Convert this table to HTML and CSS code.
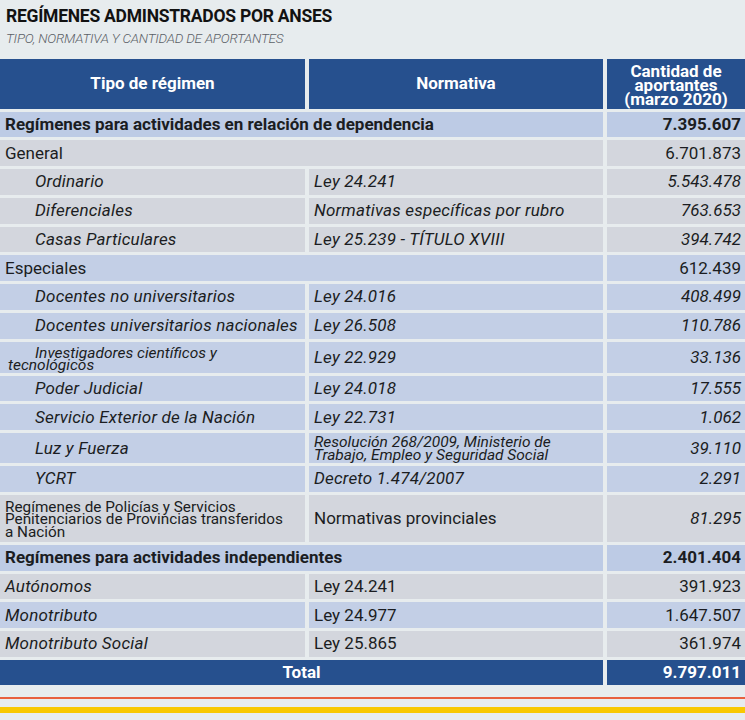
FILE: index.html
```html
<!DOCTYPE html>
<html lang="es">
<head>
<meta charset="utf-8">
<title>Regímenes administrados por ANSES</title>
<link rel="stylesheet" href="styles.css">
</head>
<body>
<header class="titles">
  <h1 class="title">REGÍMENES ADMINSTRADOS POR ANSES</h1>
  <p class="subtitle">TIPO, NORMATIVA Y CANTIDAD DE APORTANTES</p>
</header>
<div class="grid">
  <div class="cell head">Tipo de régimen</div>
  <div class="cell head">Normativa</div>
  <div class="cell head head-qty">Cantidad de<br>aportantes<br>(marzo 2020)</div>

  <div class="cell cat span2 bold">Regímenes para actividades en relación de dependencia</div>
  <div class="cell cat num bold">7.395.607</div>

  <div class="cell gray span2">General</div>
  <div class="cell gray num">6.701.873</div>

  <div class="cell gray sub it">Ordinario</div>
  <div class="cell gray it">Ley 24.241</div>
  <div class="cell gray num it">5.543.478</div>

  <div class="cell gray sub it">Diferenciales</div>
  <div class="cell gray it">Normativas específicas por rubro</div>
  <div class="cell gray num it">763.653</div>

  <div class="cell gray sub it">Casas Particulares</div>
  <div class="cell gray it">Ley 25.239 - TÍTULO XVIII</div>
  <div class="cell gray num it">394.742</div>

  <div class="cell blue span2">Especiales</div>
  <div class="cell blue num">612.439</div>

  <div class="cell blue sub it">Docentes no universitarios</div>
  <div class="cell blue it">Ley 24.016</div>
  <div class="cell blue num it">408.499</div>

  <div class="cell blue sub it">Docentes universitarios nacionales</div>
  <div class="cell blue it">Ley 26.508</div>
  <div class="cell blue num it">110.786</div>

  <div class="cell blue it inv">Investigadores científicos y<br>tecnológicos</div>
  <div class="cell blue it">Ley 22.929</div>
  <div class="cell blue num it">33.136</div>

  <div class="cell blue sub it">Poder Judicial</div>
  <div class="cell blue it">Ley 24.018</div>
  <div class="cell blue num it">17.555</div>

  <div class="cell blue sub it">Servicio Exterior de la Nación</div>
  <div class="cell blue it">Ley 22.731</div>
  <div class="cell blue num it">1.062</div>

  <div class="cell blue sub it">Luz y Fuerza</div>
  <div class="cell blue it two">Resolución 268/2009, Ministerio de<br>Trabajo, Empleo y Seguridad Social</div>
  <div class="cell blue num it">39.110</div>

  <div class="cell blue sub it">YCRT</div>
  <div class="cell blue it">Decreto 1.474/2007</div>
  <div class="cell blue num it">2.291</div>

  <div class="cell gray three">Regímenes de Policías y Servicios<br>Penitenciarios de Provincias transferidos<br>a Nación</div>
  <div class="cell gray">Normativas provinciales</div>
  <div class="cell gray num it">81.295</div>

  <div class="cell cat span2 bold">Regímenes para actividades independientes</div>
  <div class="cell cat num bold">2.401.404</div>

  <div class="cell gray it">Autónomos</div>
  <div class="cell gray">Ley 24.241</div>
  <div class="cell gray num">391.923</div>

  <div class="cell blue it">Monotributo</div>
  <div class="cell blue">Ley 24.977</div>
  <div class="cell blue num">1.647.507</div>

  <div class="cell gray it">Monotributo Social</div>
  <div class="cell gray">Ley 25.865</div>
  <div class="cell gray num">361.974</div>

  <div class="cell total span2 center">Total</div>
  <div class="cell total num">9.797.011</div>
</div>
<div class="stripes">
  <div class="stripe-orange"></div>
  <div class="stripe-yellow"></div>
</div>
</body>
</html>
```
FILE: styles.css
```css
html, body {
  margin: 0;
  padding: 0;
  background: #e7ecee;
}
body {
  width: 745px;
  height: 720px;
  overflow: hidden;
  font-family: Roboto, "Liberation Sans", sans-serif;
  color: #1b1d22;
}
.titles {
  padding: 6px 0 0 6px;
  height: 59px;
  box-sizing: border-box;
}
.title {
  margin: 0;
  font-size: 17.5px;
  line-height: 21px;
  font-weight: 700;
  letter-spacing: -0.25px;
  color: #121212;
}
.subtitle {
  margin: 3px 0 0;
  font-size: 13.5px;
  line-height: 16px;
  font-weight: 300;
  font-style: italic;
  color: #5b6066;
  letter-spacing: -0.2px;
}
.grid {
  display: grid;
  grid-template-columns: 305px 294px 1fr;
  column-gap: 4px;
  row-gap: 3px;
}
.cell {
  min-height: 25.75px;
  display: flex;
  align-items: center;
  padding: 0 5px;
  font-size: 17px;
  line-height: 19px;
  box-sizing: border-box;
  white-space: nowrap;
}
.span2 { grid-column: span 2; }
.head {
  height: 49.5px;
  background: #26508e;
  color: #fff;
  font-weight: 700;
  justify-content: center;
  text-align: center;
}
.head-qty {
  line-height: 14px;
  padding-top: 2px;
}
.cat { background: #bdcbe5; }
.gray { background: #d3d6dd; }
.blue { background: #c3cfe6; }
.total {
  background: #26508e;
  color: #fff;
  font-weight: 700;
  min-height: 25.5px;
}
.center { justify-content: center; }
.bold { font-weight: 700; }
.it { font-style: italic; letter-spacing: 0.2px; }
.num.it { letter-spacing: 0; }
.sub { padding-left: 35px; }
.num {
  justify-content: flex-end;
  padding-right: 4px;
}
.two {
  font-size: 15.5px;
  line-height: 13px;
  min-height: 30px;
  padding-top: 1px;
  letter-spacing: 0;
}
.inv {
  display: block;
  padding: 5px 0 0 8px;
  text-indent: 27px;
  font-size: 15.5px;
  line-height: 12.5px;
  min-height: 31px;
  letter-spacing: 0;
}
.three {
  font-size: 15.3px;
  line-height: 12.5px;
  min-height: 47px;
  padding-top: 2px;
}
.stripes {
  padding-top: 11.5px;
}
.stripe-orange {
  height: 2px;
  background: #e8603e;
}
.stripe-yellow {
  margin-top: 8px;
  height: 6px;
  background: #f8c800;
}
```
